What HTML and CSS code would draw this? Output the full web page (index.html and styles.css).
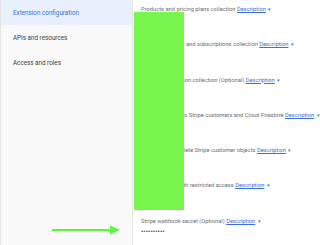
FILE: index.html
```html
<!DOCTYPE html>
<html lang="en">
<head>
<meta charset="UTF-8">
<meta name="viewport" content="width=device-width, initial-scale=1.0">
<title>Extension configuration</title>
<link rel="stylesheet" href="styles.css">
</head>
<body>

<div class="page">
  <nav class="sidebar">
    <a class="nav-item active" href="#">Extension configuration</a>
    <a class="nav-item" href="#">APIs and resources</a>
    <a class="nav-item" href="#">Access and roles</a>
  </nav>

  <main class="content">
    <div class="field">
      <span class="label">Products and pricing plans collection <a class="desc" href="#">Description</a> <span class="caret">&#9662;</span></span>
    </div>
    <div class="field">
      <span class="label">Customer details and subscriptions collection <a class="desc" href="#">Description</a> <span class="caret">&#9662;</span></span>
    </div>
    <div class="field">
      <span class="label">Stripe configuration collection (Optional) <a class="desc" href="#">Description</a> <span class="caret">&#9662;</span></span>
    </div>
    <div class="field">
      <span class="label">Sync new users to Stripe customers and Cloud Firestore <a class="desc" href="#">Description</a> <span class="caret">&#9662;</span></span>
    </div>
    <div class="field">
      <span class="label">Automatically delete Stripe customer objects <a class="desc" href="#">Description</a> <span class="caret">&#9662;</span></span>
    </div>
    <div class="field">
      <span class="label">Stripe API key with restricted access <a class="desc" href="#">Description</a> <span class="caret">&#9662;</span></span>
    </div>
    <div class="field last">
      <span class="label">Stripe webhook secret (Optional) <a class="desc" href="#">Description</a> <span class="caret">&#9662;</span></span>
      <span class="secret">&bull;&bull;&bull;&bull;&bull;&bull;&bull;&bull;&bull;&bull;</span>
    </div>

    <div class="redact"></div>
  </main>

  <svg class="arrow" width="70" height="10" viewBox="0 0 70 10">
    <line x1="0" y1="5" x2="60" y2="5" stroke="#5ff53a" stroke-width="2"/>
    <polygon points="58,0.5 68,5 58,9.5" fill="#5ff53a"/>
  </svg>
</div>

</body>
</html>
```

FILE: styles.css
```css
body {
  margin: 0;
  padding: 0;
  font-family: Roboto, "Liberation Sans", Arial, sans-serif;
  background-color: #fff;
}

.page {
  position: relative;
  display: flex;
  width: 320px;
  height: 245px;
  overflow: hidden;
}

.sidebar {
  width: 131px;
  flex-shrink: 0;
  background-color: #f9f9f9;
  border-left: 1px solid #e4e4e4;
  border-right: 1px solid #e4e4e4;
  display: flex;
  flex-direction: column;
}

.nav-item {
  display: block;
  height: 25px;
  line-height: 27px;
  padding-left: 12px;
  font-size: 6.3px;
  color: #3c4043;
  text-decoration: none;
}

.nav-item.active {
  background-color: #e8f0fe;
  color: #3b6fd8;
}

.content {
  position: relative;
  flex: 1;
  padding-left: 8px;
}

.field {
  height: 35.3px;
}

.label {
  display: block;
  padding-top: 6px;
  font-size: 5.75px;
  color: #6b6f73;
  white-space: nowrap;
}

.desc {
  color: #3b6fd8;
  text-decoration: underline;
}

.caret {
  color: #3b6fd8;
  font-size: 5px;
  margin-left: 1px;
}

.secret {
  display: block;
  margin-top: 4px;
  font-size: 7px;
  line-height: 8px;
  color: #444;
}

.redact {
  position: absolute;
  left: 1px;
  top: 12px;
  width: 50px;
  height: 198px;
  background-color: #76f54c;
}

.arrow {
  position: absolute;
  left: 52px;
  top: 225px;
}
```
